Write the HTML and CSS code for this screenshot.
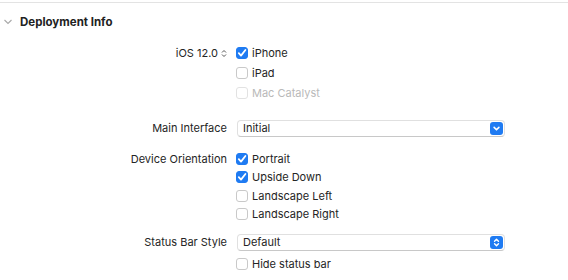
FILE: index.html
```html
<!DOCTYPE html>
<html>
<head>
<meta charset="utf-8">
<link rel="stylesheet" href="styles.css">
</head>
<body>
<div class="topline"></div>
<div class="header">
  <svg class="disclosure" width="8" height="6" viewBox="0 0 8 6"><path d="M0.5 1 L4 4.5 L7.5 1" fill="none" stroke="#a8a8a8" stroke-width="1.1"/></svg>
  <span class="title">Deployment Info</span>
</div>

<div class="group g1">
  <div class="label">iOS 12.0
    <svg class="stepper" width="6" height="9" viewBox="0 0 6 9"><path d="M1 3.5 L3 1.5 L5 3.5 M1 5.5 L3 7.5 L5 5.5" fill="none" stroke="#555" stroke-width="1"/></svg>
  </div>
  <div class="options">
    <div class="opt"><span class="cb on"><svg viewBox="0 0 12 12"><path d="M2.8 6.2 L5 8.6 L9.4 3" fill="none" stroke="#fff" stroke-width="1.8" stroke-linecap="round" stroke-linejoin="round"/></svg></span>iPhone</div>
    <div class="opt"><span class="cb"></span>iPad</div>
    <div class="opt disabled"><span class="cb"></span>Mac Catalyst</div>
  </div>
</div>

<div class="group g2">
  <div class="label">Main Interface</div>
  <div class="options">
    <div class="opt"><div class="popup"><span>Initial</span><span class="pbtn"><svg viewBox="0 0 12 12"><path d="M3.8 5 L6 7.2 L8.2 5" fill="none" stroke="#fff" stroke-width="1.5" stroke-linecap="round" stroke-linejoin="round"/></svg></span></div></div>
  </div>
</div>

<div class="group g3">
  <div class="label">Device Orientation</div>
  <div class="options">
    <div class="opt"><span class="cb on"><svg viewBox="0 0 12 12"><path d="M2.8 6.2 L5 8.6 L9.4 3" fill="none" stroke="#fff" stroke-width="1.8" stroke-linecap="round" stroke-linejoin="round"/></svg></span>Portrait</div>
    <div class="opt"><span class="cb on"><svg viewBox="0 0 12 12"><path d="M2.8 6.2 L5 8.6 L9.4 3" fill="none" stroke="#fff" stroke-width="1.8" stroke-linecap="round" stroke-linejoin="round"/></svg></span>Upside Down</div>
    <div class="opt"><span class="cb"></span>Landscape Left</div>
    <div class="opt"><span class="cb"></span>Landscape Right</div>
  </div>
</div>

<div class="group g4">
  <div class="label">Status Bar Style</div>
  <div class="options">
    <div class="opt"><div class="popup"><span>Default</span><span class="pbtn"><svg viewBox="0 0 12 12"><path d="M4.2 4.8 L6 3 L7.8 4.8 M4.2 7.2 L6 9 L7.8 7.2" fill="none" stroke="#fff" stroke-width="1.3" stroke-linecap="round" stroke-linejoin="round"/></svg></span></div></div>
    <div class="opt"><span class="cb"></span>Hide status bar</div>
  </div>
</div>
</body>
</html>
```
FILE: styles.css
```css
html, body {
  margin: 0;
  padding: 0;
  background: #ffffff;
}
body {
  font-family: Inter, "Liberation Sans", sans-serif;
  font-size: 11px;
  color: #252525;
  width: 568px;
  height: 280px;
  overflow: hidden;
}
.topline {
  height: 1px;
  background: #e3e3e3;
  margin-top: 2px;
}
.header {
  display: flex;
  align-items: center;
  height: 38px;
  padding-left: 4px;
}
.disclosure {
  margin-right: 8px;
}
.title {
  font-weight: 700;
  font-size: 11.5px;
  color: #222;
}
.group {
  display: grid;
  grid-template-columns: 227px 1fr;
  column-gap: 9px;
}
.label {
  text-align: right;
  height: 20px;
  line-height: 20px;
  display: flex;
  justify-content: flex-end;
  align-items: center;
  gap: 3px;
}
.options {
  display: flex;
  flex-direction: column;
}
.opt {
  display: flex;
  align-items: center;
  height: 20px;
}
.cb {
  box-sizing: border-box;
  width: 12px;
  height: 12px;
  border-radius: 3px;
  border: 1px solid #c9c9c9;
  background: #fff;
  margin-right: 4px;
  display: inline-flex;
  flex: none;
}
.cb.on {
  background: #1f7bf2;
  border-color: #1f7bf2;
}
.cb svg {
  width: 12px;
  height: 12px;
  margin: -1px;
}
.disabled {
  color: #b9b9b9;
}
.disabled .cb {
  border-color: #e2e2e2;
}
.g1 {
  margin-top: 2px;
}
.g2 {
  margin-top: 15px;
}
.g3 {
  margin-top: 12px;
}
.g3 .opt, .g3 .label {
  height: 18.33px;
}
.g4 {
  margin-top: 8px;
}
.g4 .opt, .g4 .label {
  height: 22px;
}
.popup {
  box-sizing: border-box;
  width: 268px;
  height: 17px;
  margin-left: 1px;
  border: 1px solid #e0e0e0;
  border-bottom-color: #c8c8c8;
  border-radius: 4px;
  display: flex;
  align-items: center;
  justify-content: space-between;
  padding: 0 1px 0 5px;
  background: #fff;
}
.pbtn {
  width: 13px;
  height: 13px;
  border-radius: 3px;
  background: #1f7bf2;
  display: inline-flex;
}
.pbtn svg {
  width: 13px;
  height: 13px;
}
```
